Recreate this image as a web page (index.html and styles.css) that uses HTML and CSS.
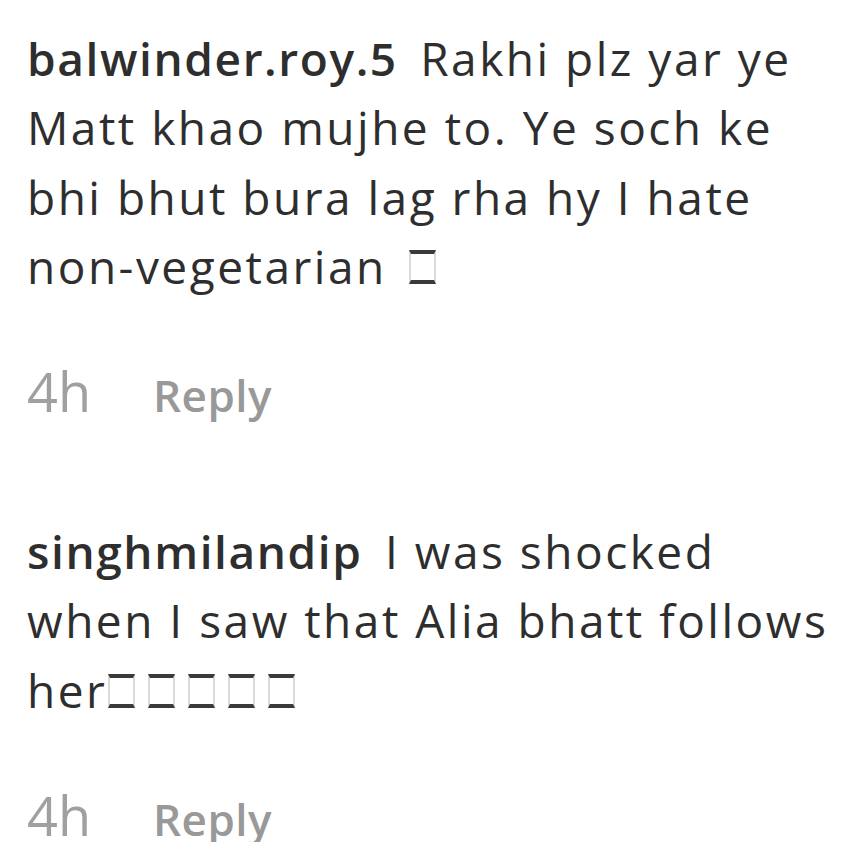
FILE: index.html
```html
<!DOCTYPE html>
<html lang="en">
<head>
<meta charset="utf-8">
<title>Comments</title>
<link rel="stylesheet" href="styles.css">
</head>
<body>
<ul class="comments">
  <li class="comment">
    <p class="comment-text"><a class="user">balwinder.roy.5</a> Rakhi plz yar ye<br>Matt khao mujhe to. Ye soch ke<br>bhi bhut bura lag rha hy I hate<br>non-vegetarian <span class="tofu tofu-after-space"></span></p>
    <div class="meta"><time class="time">4h</time><button class="reply">Reply</button></div>
  </li>
  <li class="comment">
    <p class="comment-text"><a class="user">singhmilandip</a> I was shocked<br>when I saw that Alia bhatt follows<br>her<span class="tofu"></span><span class="tofu"></span><span class="tofu"></span><span class="tofu"></span><span class="tofu"></span></p>
    <div class="meta"><time class="time">4h</time><button class="reply">Reply</button></div>
  </li>
</ul>
</body>
</html>
```

FILE: styles.css
```css
html, body {
  margin: 0;
  padding: 0;
  background: #ffffff;
}

.comments {
  list-style: none;
  margin: 0;
  padding: 24px 0 0 27px;
  font-family: "Open Sans", "Noto Sans", "DejaVu Sans", sans-serif;
  color: #2e2e2e;
}

.comment {
  margin: 0 0 91px 0;
}

.comment-text {
  margin: 0;
  font-size: 46px;
  line-height: 69.3px;
  letter-spacing: 2.5px;
  white-space: nowrap;
}

.user {
  font-weight: 600;
  letter-spacing: 1.6px;
  margin-right: 8px;
  color: #2e2e2e;
}

.tofu {
  display: inline-block;
  box-sizing: border-box;
  width: 27px;
  height: 34px;
  margin-left: 1px;
  margin-right: 12px;
  border-top: 4px solid #3a3a3a;
  border-bottom: 4px solid #3a3a3a;
  border-left: 2px solid #dadada;
  border-right: 2px solid #dadada;
  vertical-align: baseline;
}

.tofu-after-space {
  margin-left: 8px;
}

.meta {
  display: flex;
  align-items: baseline;
  gap: 62px;
  margin-top: 55px;
}

.time {
  font-size: 54px;
  line-height: 70px;
  color: #a0a0a0;
}

.reply {
  border: 0;
  background: none;
  padding: 0;
  font-family: inherit;
  font-size: 44px;
  font-weight: 600;
  letter-spacing: 0.5px;
  color: #999999;
}
```
